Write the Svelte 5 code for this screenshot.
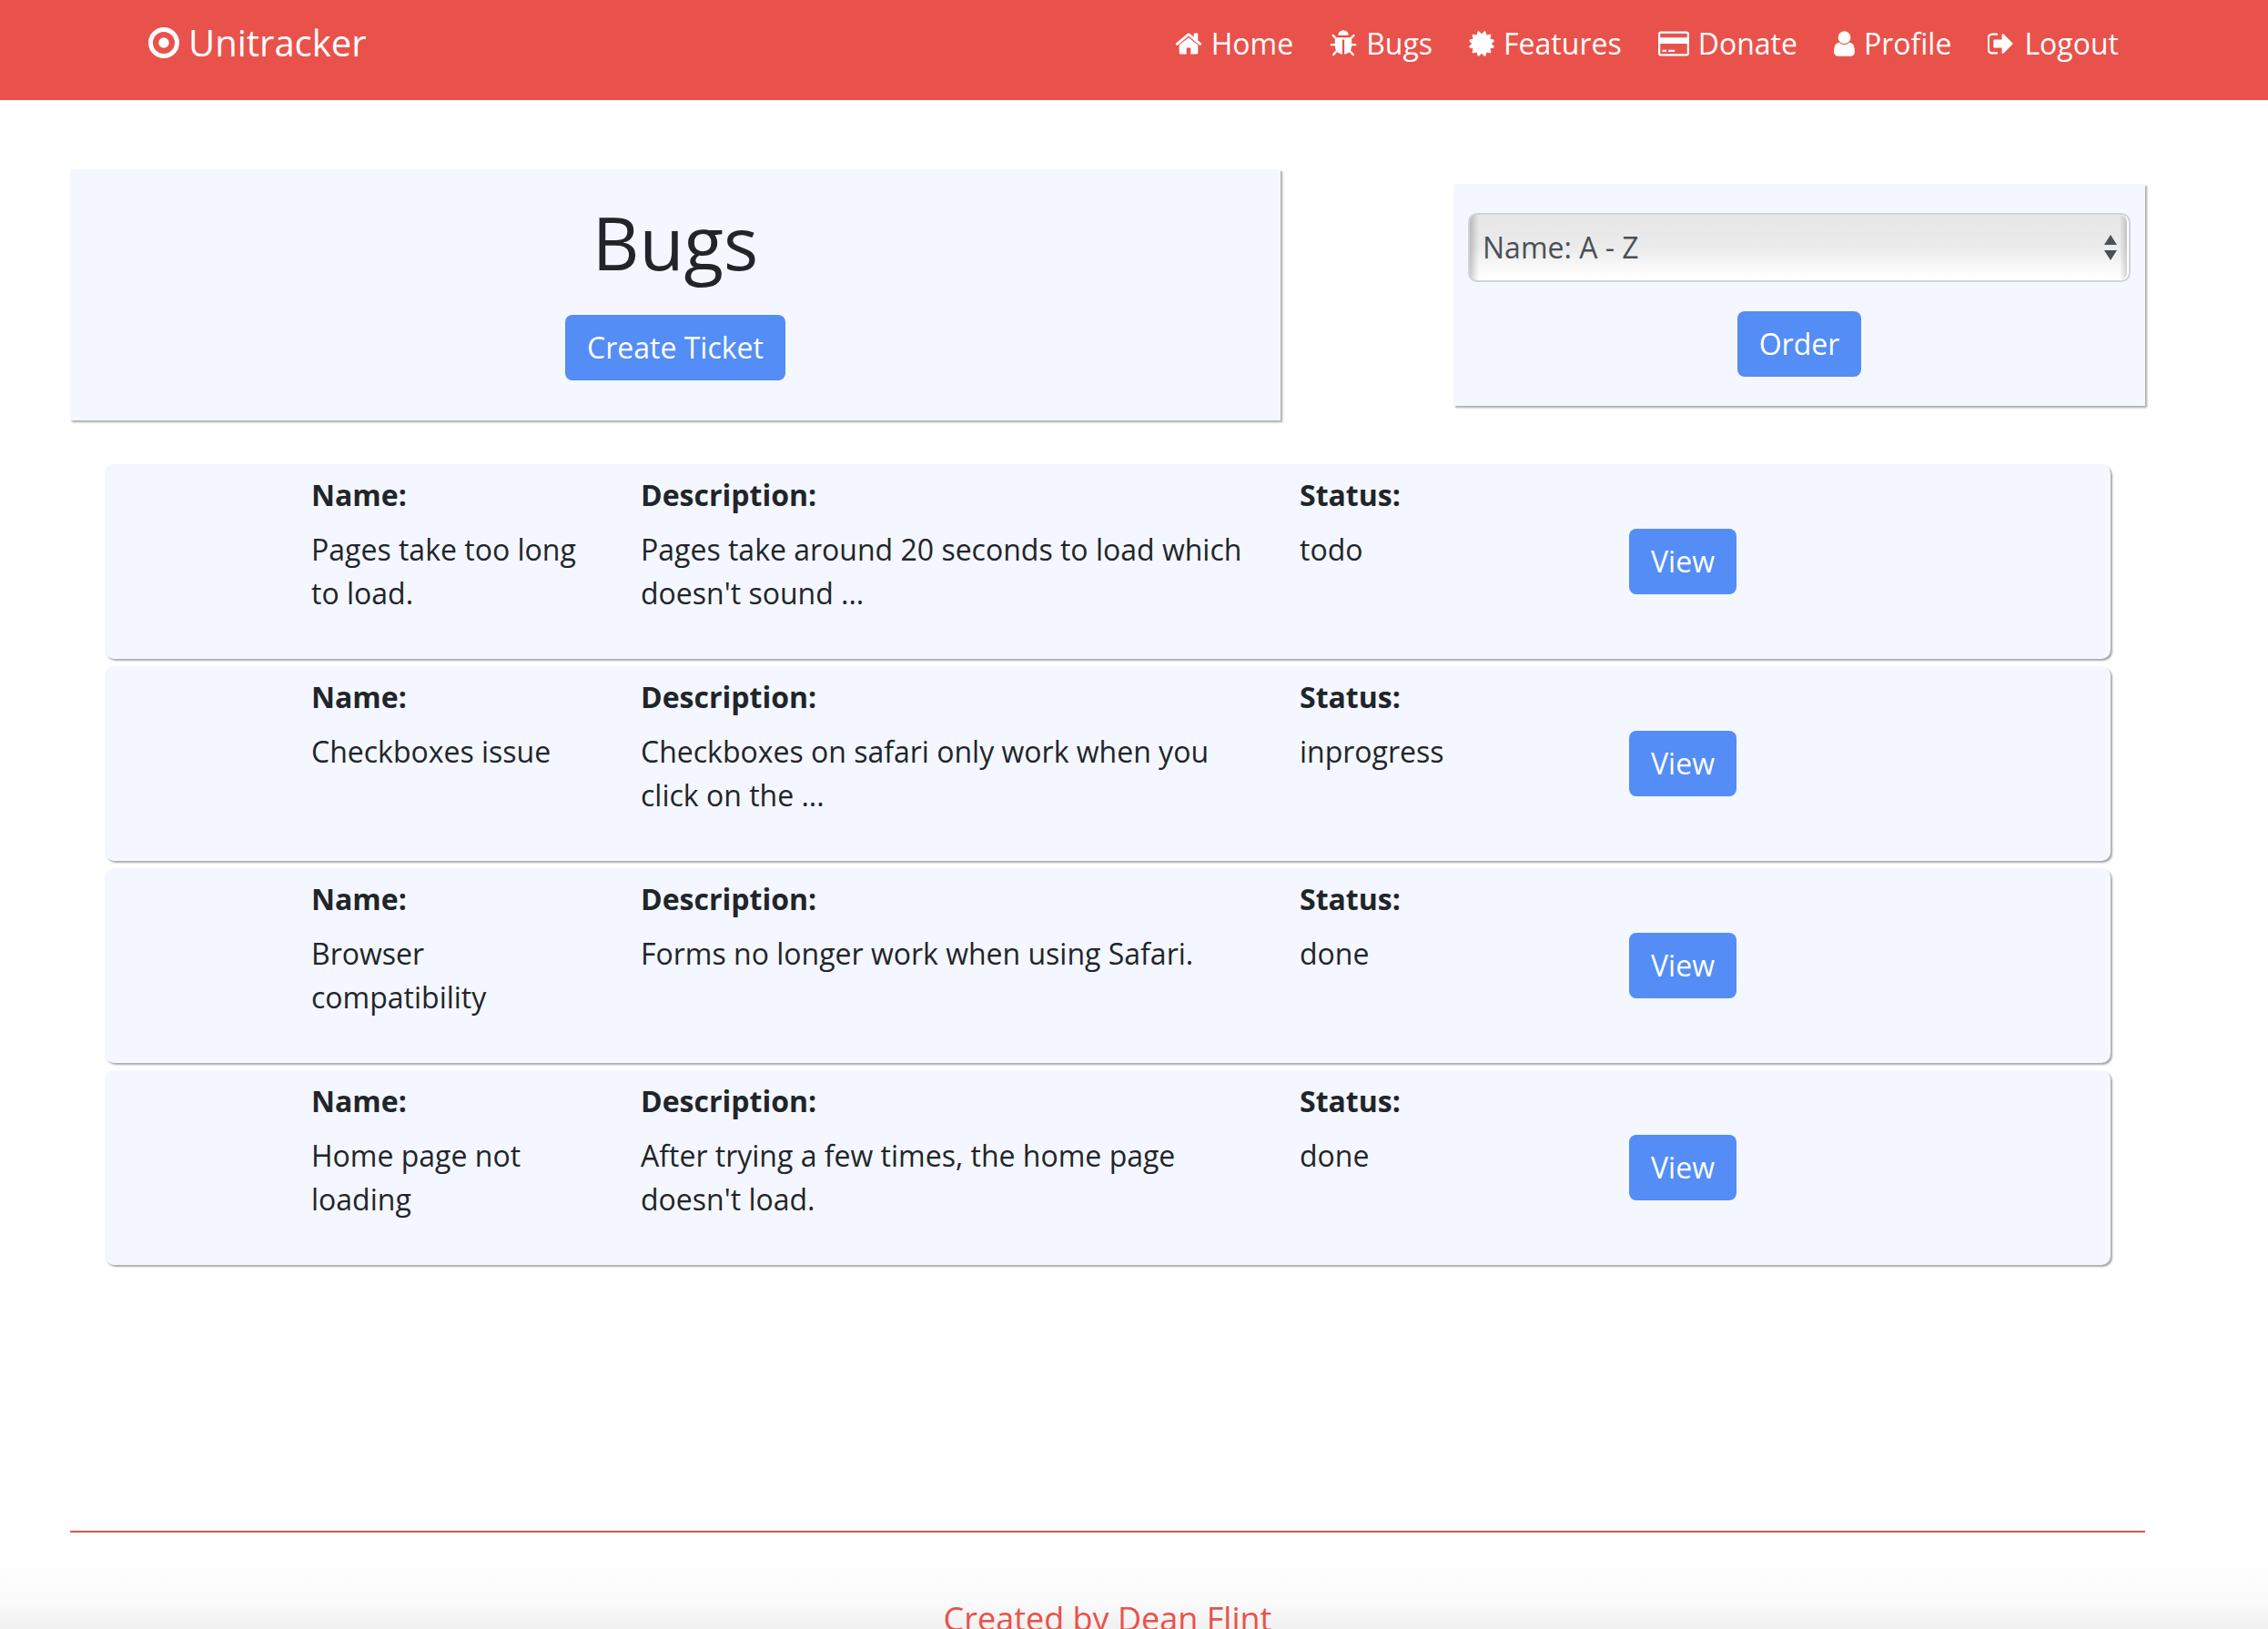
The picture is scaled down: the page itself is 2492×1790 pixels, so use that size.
<script>
  const navLinks = [
    {
      label: 'Home',
      box: '64 0 1664 1792',
      width: 30,
      path: 'M1472 992v480q0 26-19 45t-45 19h-384v-384h-256v384h-384q-26 0-45-19t-19-45v-480q0-1 .5-3t.5-3l575-474 575 474q1 2 1 6zm223-69l-62 74q-8 9-21 11h-3q-13 0-21-7l-692-577-692 577q-12 8-24 7-13-2-21-11l-62-74q-8-10-7-23.5t11-21.5l719-599q32-26 76-26t76 26l244 204v-195q0-14 9-23t23-9h192q14 0 23 9t9 23v408l219 182q10 8 11 21.5t-7 23.5z'
    },
    {
      label: 'Bugs',
      box: '64 0 1664 1792',
      width: 30,
      path: 'M1696 960q0 26-19 45t-45 19h-224q0 171-67 290l208 209q19 19 19 45t-19 45q-18 19-45 19t-45-19l-198-197q-5 5-15 13t-42 28.5-65 36.5-82 29-97 13v-896h-128v896q-51 0-101.5-13.5t-87-33-66-39-43.5-32.5l-15-14-183 207q-20 21-48 21-24 0-43-16-19-18-20.5-44.5t15.5-46.5l202-227q-58-114-58-274h-224q-26 0-45-19t-19-45 19-45 45-19h224v-294l-173-173q-19-19-19-45t19-45 45-19 45 19l173 173h844l173-173q19-19 45-19t45 19 19 45-19 45l-173 173v294h224q26 0 45 19t19 45zm-480-576h-640q0-133 93.5-226.5t226.5-93.5 226.5 93.5 93.5 226.5z'
    },
    {
      label: 'Features',
      box: '128 0 1536 1792',
      width: 28,
      path: 'M1504 896l138 135q30 28 20 70-12 41-52 51l-188 48 53 186q12 41-19 70-29 31-70 19l-186-53-48 188q-10 40-51 52-12 2-19 2-31 0-51-22l-135-138-135 138q-28 30-70 20-41-11-51-52l-48-188-186 53q-41 12-70-19-31-29-19-70l53-186-188-48q-40-10-52-51-10-42 20-70l138-135-138-135q-30-28-20-70 12-41 52-51l188-48-53-186q-12-41 19-70 29-31 70-19l186 53 48-188q10-41 51-51 41-12 70 19l135 139 135-139q29-30 70-19 41 10 51 51l48 188 186-53q41-12 70 19 31 29 19 70l-53 186 188 48q40 10 52 51 10 42-20 70z'
    },
    {
      label: 'Donate',
      box: '0 0 1920 1792',
      width: 34,
      path: 'M1760 128q66 0 113 47t47 113v1216q0 66-47 113t-113 47h-1600q-66 0-113-47t-47-113v-1216q0-66 47-113t113-47h1600zm-1600 128q-13 0-22.5 9.5t-9.5 22.5v224h1664v-224q0-13-9.5-22.5t-22.5-9.5h-1600zm1600 1280q13 0 22.5-9.5t9.5-22.5v-608h-1664v608q0 13 9.5 22.5t22.5 9.5h1600zm-1504-128v-128h256v128h-256zm384 0v-128h384v128h-384z'
    },
    {
      label: 'Profile',
      box: '256 0 1280 1792',
      width: 23,
      path: 'M1536 1399q0 109-62.5 187t-150.5 78h-854q-88 0-150.5-78t-62.5-187q0-85 8.5-160.5t31.5-152 58.5-131 94-89 134.5-34.5q131 128 313 128t313-128q76 0 134.5 34.5t94 89 58.5 131 31.5 152 8.5 160.5zm-256-887q0 159-112.5 271.5t-271.5 112.5-271.5-112.5-112.5-271.5 112.5-271.5 271.5-112.5 271.5 112.5 112.5 271.5z'
    },
    {
      label: 'Logout',
      box: '96 0 1664 1792',
      width: 30,
      path: 'M704 1440q0 4 1 20t.5 26.5-3 23.5-10 19.5-20.5 6.5h-320q-119 0-203.5-84.5t-84.5-203.5v-704q0-119 84.5-203.5t203.5-84.5h320q13 0 22.5 9.5t9.5 22.5q0 4 1 20t.5 26.5-3 23.5-10 19.5-20.5 6.5h-320q-66 0-113 47t-47 113v704q0 66 47 113t113 47h312l11.5 1 11.5 3 8 5.5 7 9 2 13.5zm928-544q0 26-19 45l-544 544q-19 19-45 19t-45-19-19-45v-288h-448q-26 0-45-19t-19-45v-384q0-26 19-45t45-19h448v-288q0-26 19-45t45-19 45 19l544 544q19 19 19 45z'
    }
  ];

  const tickets = [
    { name: 'Pages take too long to load.', description: "Pages take around 20 seconds to load which doesn't sound ...", status: 'todo' },
    { name: 'Checkboxes issue', description: 'Checkboxes on safari only work when you click on the ...', status: 'inprogress' },
    { name: 'Browser compatibility', description: 'Forms no longer work when using Safari.', status: 'done' },
    { name: 'Home page not loading', description: "After trying a few times, the home page doesn't load.", status: 'done' }
  ];

  let order = $state('name-asc');
</script>

<div class="page">
  <header class="topbar">
    <a class="brand" href="#home">
      <svg width="34" height="34" viewBox="0 0 34 34" aria-hidden="true">
        <circle cx="17" cy="17" r="14.5" fill="none" stroke="currentColor" stroke-width="5" />
        <circle cx="17" cy="17" r="5.7" fill="currentColor" />
      </svg>
      Unitracker
    </a>
    <nav class="nav">
      {#each navLinks as link}
        <a href="#{link.label.toLowerCase()}">
          <svg width={link.width} height="32" viewBox={link.box} aria-hidden="true"><path d={link.path} fill="currentColor" /></svg>
          {link.label}
        </a>
      {/each}
    </nav>
  </header>

  <div class="container">
    <div class="intro">
      <section class="panel title-panel">
        <h1>Bugs</h1>
        <a class="button" href="#create">Create Ticket</a>
      </section>
      <form class="panel order-panel" onsubmit={(e) => e.preventDefault()}>
        <div class="select-wrap">
          <select aria-label="Order tickets by" bind:value={order}>
            <option value="name-asc">Name: A - Z</option>
            <option value="name-desc">Name: Z - A</option>
          </select>
          <svg class="arrows" width="14" height="28" viewBox="0 0 14 28" aria-hidden="true">
            <path d="M7 0l7 11H0zM7 28l7-11H0z" fill="#495057" />
          </svg>
        </div>
        <button class="button" type="submit">Order</button>
      </form>
    </div>

    <ul class="tickets">
      {#each tickets as ticket}
        <li class="ticket">
          <dl>
            <div class="field">
              <dt>Name:</dt>
              <dd>{ticket.name}</dd>
            </div>
            <div class="field">
              <dt>Description:</dt>
              <dd>{ticket.description}</dd>
            </div>
            <div class="field">
              <dt>Status:</dt>
              <dd>{ticket.status}</dd>
            </div>
          </dl>
          <div class="action">
            <a class="button" href="#view">View</a>
          </div>
        </li>
      {/each}
    </ul>

    <footer>Created by Dean Flint</footer>
  </div>
</div>

<style>
  :global(body) {
    margin: 0;
    background: #fff;
  }

  .page {
    --red: #e9524b;
    --blue: #548df5;
    --panel: #f4f7ff;
    height: 100vh;
    overflow: hidden;
    background: linear-gradient(to top, #f0f0f0, #fafafa 28px, #fff 80px);
    color: #212529;
    font: 32px/48px 'Open Sans', sans-serif;
  }

  a {
    color: inherit;
    text-decoration: none;
  }

  .topbar {
    display: flex;
    justify-content: space-between;
    align-items: baseline;
    box-sizing: border-box;
    height: 110px;
    padding: 17px 164px 0 163px;
    background: var(--red);
    color: #fff;
  }

  .brand {
    display: flex;
    align-items: center;
    gap: 10px;
    font-size: 40px;
    line-height: 60px;
  }

  .nav {
    display: flex;
    gap: 40px;
  }

  .nav a {
    display: flex;
    align-items: center;
    gap: 10px;
  }

  .container {
    padding: 76px 135px 0 77px;
  }

  .intro {
    display: flex;
    justify-content: space-between;
    align-items: center;
  }

  .panel {
    box-sizing: border-box;
    display: flex;
    flex-direction: column;
    align-items: center;
    gap: 32px;
    background: var(--panel);
    box-shadow: 2px 2px 2px #aaa;
  }

  .title-panel {
    width: 58.333%;
    padding: 32px 16px 44px;
  }

  .order-panel {
    width: 33.333%;
    padding: 32px 16px;
  }

  h1 {
    margin: 0;
    font-size: 80px;
    font-weight: 400;
    line-height: 96px;
  }

  .button {
    display: block;
    padding: 12px 24px;
    border: 0;
    border-radius: 8px;
    background: var(--blue);
    color: #fff;
    font: inherit;
  }

  .select-wrap {
    position: relative;
    width: 100%;
  }

  select {
    display: block;
    box-sizing: border-box;
    width: 100%;
    height: 76px;
    padding: 0 48px 0 14px;
    border: 2px solid #ced4da;
    border-radius: 10px;
    appearance: none;
    background:
      linear-gradient(to right, #0003, #0000 10px),
      linear-gradient(to left, #0003, #0000 10px),
      linear-gradient(#e6e6e6, #ebebeb 50%, #fff 95%);
    box-shadow: inset -2px 0 0 #fff;
    color: #495057;
    font: inherit;
  }

  .arrows {
    position: absolute;
    top: 24px;
    right: 15px;
    pointer-events: none;
  }

  .tickets {
    display: grid;
    gap: 8px;
    margin: 48px 38px 292px;
    padding: 0;
    list-style: none;
  }

  .ticket {
    display: grid;
    grid-template-columns: repeat(12, 1fr);
    padding: 10px 16px 48px;
    border-radius: 10px;
    background: var(--panel);
    box-shadow: 2px 2px 2px #aaa;
  }

  dl {
    display: grid;
    grid-column: 2 / span 8;
    grid-template-columns: 2fr 4fr 2fr;
    margin: 0;
  }

  .field {
    padding: 0 30px;
  }

  dt {
    margin-bottom: 12px;
    font-weight: 700;
  }

  dd {
    margin: 0;
  }

  .action {
    display: flex;
    grid-column: span 2;
    align-items: center;
    justify-content: flex-start;
    margin: 0 30px -38px;
  }

  footer {
    padding-top: 68px;
    border-top: 2px solid var(--red);
    color: var(--red);
    font-size: 36px;
    line-height: 54px;
    text-align: center;
  }
</style>
